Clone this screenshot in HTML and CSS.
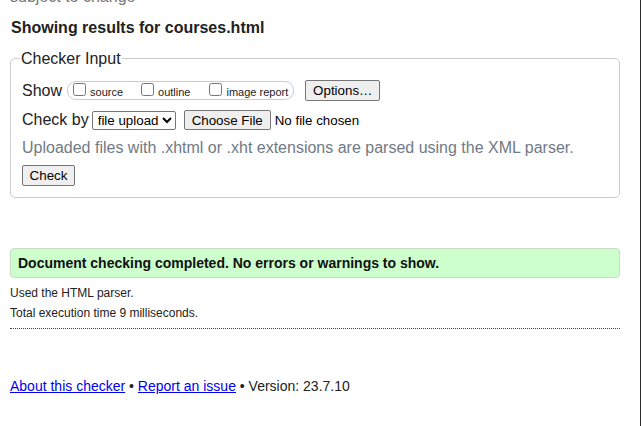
FILE: index.html
```html
<!DOCTYPE html>
<html lang="en">
<head>
<meta charset="utf-8">
<title>Showing results for courses.html - Nu Html Checker</title>
<link rel="stylesheet" href="styles.css">
</head>
<body>
<p class="subject">subject to change</p>
<h2 class="results-for">Showing results for courses.html</h2>
<form class="checker-form">
  <fieldset class="checker-input">
    <legend class="checker-legend">Checker Input</legend>
    <div class="row row-show">
      <span class="row-label">Show</span>
      <span class="show-group">
        <label class="opt opt-source"><input type="checkbox" class="cb"><span>source</span></label>
        <label class="opt opt-outline"><input type="checkbox" class="cb"><span>outline</span></label>
        <label class="opt opt-image"><input type="checkbox" class="cb"><span>image report</span></label>
      </span>
      <button type="button" class="btn btn-options">Options…</button>
    </div>
    <div class="row row-checkby">
      <span class="row-label">Check by</span>
      <select class="docselect">
        <option>file upload</option>
      </select>
      <span class="file-input">
        <button type="button" class="btn btn-file">Choose File</button>
        <span class="file-status">No file chosen</span>
      </span>
    </div>
    <p class="instructions">Uploaded files with .xhtml or .xht extensions are parsed using the XML parser.</p>
    <div class="row row-submit">
      <button type="button" class="btn btn-check">Check</button>
    </div>
  </fieldset>
</form>
<div class="results">
  <p class="success">Document checking completed. No errors or warnings to show.</p>
  <p class="details">Used the HTML parser.</p>
  <p class="details details-time">Total execution time 9 milliseconds.</p>
  <hr class="sep">
</div>
<p class="footer"><a href="#">About this checker</a> • <a href="#">Report an issue</a> • Version: 23.7.10</p>
</body>
</html>
```

FILE: styles.css
```css
html {
  margin: 0;
  background: #fff;
  border-right: 1px solid #2a2a2a;
  min-height: 100%;
  box-sizing: border-box;
}
body {
  margin: 0 20px 0 10px;
  font-family: "Liberation Sans", Arial, sans-serif;
  color: #222;
  font-size: 16px;
  overflow: hidden;
}
.subject {
  margin: -12px 0 0 0;
  line-height: 18px;
  color: #777;
  font-size: 16px;
}
.results-for {
  margin: 12px 0 0 1px;
  font-size: 16px;
  line-height: 19px;
  font-weight: bold;
  color: #222;
}
.checker-form {
  margin: 0;
}
.checker-input {
  margin: 12.5px 0 0 0;
  padding: 12.5px 11px 11px 11px;
  border: 1px solid #ccc;
  border-radius: 5px;
  min-width: 0;
}
.checker-legend {
  padding: 0 1px;
  margin-left: -2px;
  font-size: 16px;
  line-height: 18px;
  color: #222;
}
.row {
  display: flex;
  align-items: center;
}
.row-label {
  font-size: 16px;
  line-height: 18px;
}
.row-show {
  height: 21px;
}
.show-group {
  display: flex;
  align-items: center;
  box-sizing: border-box;
  height: 19px;
  margin-left: 5px;
  padding: 0 5px;
  border: 1px solid #ccc;
  border-radius: 9px;
}
.opt {
  display: flex;
  align-items: baseline;
  font-size: 11px;
  line-height: 13px;
  color: #222;
}
.opt-source { margin-right: 18px; }
.opt-outline { margin-right: 19px; }
.cb {
  width: 13px;
  height: 13px;
  margin: 0 4px 0 0;
}
.btn {
  box-sizing: border-box;
  font-family: "Liberation Sans", Arial, sans-serif;
  font-size: 13.333px;
  color: #000;
  background: #efefef;
  border: 1px solid #767676;
  border-radius: 2px;
  padding: 0 6px;
  line-height: 15px;
}
.btn-options {
  width: 75px;
  height: 21px;
  margin-left: 11px;
}
.row-checkby {
  height: 20px;
  margin-top: 9px;
}
.docselect {
  box-sizing: border-box;
  width: 84px;
  height: 19px;
  margin-left: 3px;
  font-family: "Liberation Sans", Arial, sans-serif;
  font-size: 13.333px;
  color: #000;
  background: #fff;
  border: 1px solid #767676;
  border-radius: 2px;
  padding: 0 0 0 1px;
}
.file-input {
  display: flex;
  align-items: center;
  margin-left: 8px;
}
.btn-file {
  width: 87px;
  height: 20px;
}
.file-status {
  margin-left: 4px;
  font-size: 13.333px;
  color: #000;
}
.instructions {
  margin: 8.5px 0 0 0;
  font-size: 16px;
  line-height: 18px;
  color: #717a84;
}
.row-submit {
  margin-top: 8.5px;
}
.btn-check {
  width: 53px;
  height: 21px;
}
.results {
  margin-top: 50px;
}
.success {
  margin: 0;
  padding: 6px 7px;
  font-size: 14px;
  line-height: 16px;
  font-weight: bold;
  color: #111;
  background: #ccffcc;
  border: 1px solid #c8dcc8;
  border-radius: 4px;
}
.details {
  margin: 8px 0 0 0;
  font-size: 12px;
  line-height: 14px;
  color: #222;
}
.details-time {
  margin-top: 6px;
}
.sep {
  margin: 8px 0 0 0;
  border: 0;
  border-top: 1px dotted #444;
  height: 0;
}
.footer {
  margin: 49px 0 0 0;
  font-size: 14px;
  line-height: 16px;
  color: #222;
}
.footer a {
  color: #0000ee;
}
```
